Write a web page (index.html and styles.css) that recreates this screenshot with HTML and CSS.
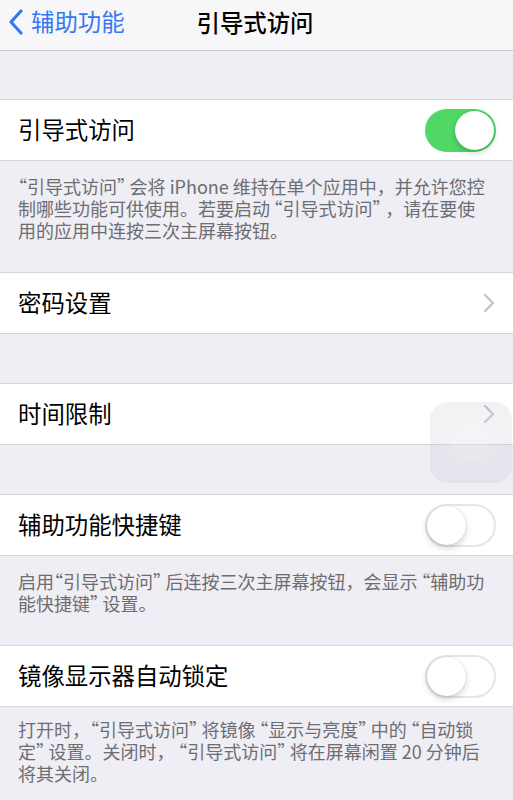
FILE: index.html
```html
<!DOCTYPE html>
<html lang="zh-CN">
<head>
<meta charset="utf-8">
<title>引导式访问</title>
<link rel="stylesheet" href="styles.css">
</head>
<body>
<div class="screen">
  <header class="nav">
    <div class="back">
      <svg class="back-icon" width="16" height="26" viewBox="0 0 16 26"><path d="M13 2 L3 13 L13 24" fill="none" stroke="#3478f6" stroke-width="3.2" stroke-linecap="round" stroke-linejoin="round"/></svg>
      <span class="back-text">辅助功能</span>
    </div>
    <div class="title">引导式访问</div>
    <div></div>
  </header>

  <div class="spacer first"></div>

  <div class="group">
    <div class="row"><span class="label">引导式访问</span><span class="toggle on"><span class="knob"></span></span></div>
  </div>
  <p class="footer"><span class="ql">“</span>引导式访问<span class="qr">”</span>会将 iPhone 维持在单个应用中，并允许您控制哪些功能可供使用。若要启动<span class="ql">“</span>引导式访问<span class="qr">”</span>，请在要使用的应用中连按三次主屏幕按钮。</p>

  <div class="group">
    <div class="row"><span class="label">密码设置</span><svg class="chev" width="12" height="20" viewBox="0 0 12 20"><path d="M2 2 L10 10 L2 18" fill="none" stroke="#c4c4c9" stroke-width="2.4" stroke-linecap="round" stroke-linejoin="round"/></svg></div>
  </div>

  <div class="spacer"></div>

  <div class="group">
    <div class="row"><span class="label">时间限制</span><svg class="chev" width="12" height="20" viewBox="0 0 12 20"><path d="M2 2 L10 10 L2 18" fill="none" stroke="#c4c4c9" stroke-width="2.4" stroke-linecap="round" stroke-linejoin="round"/></svg></div>
  </div>

  <div class="spacer"></div>

  <div class="group">
    <div class="row"><span class="label">辅助功能快捷键</span><span class="toggle off"><span class="knob"></span></span></div>
  </div>
  <p class="footer">启用<span class="ql">“</span>引导式访问<span class="qr">”</span>后连按三次主屏幕按钮，会显示<span class="ql">“</span>辅助功能快捷键<span class="qr">”</span>设置。</p>

  <div class="group">
    <div class="row"><span class="label">镜像显示器自动锁定</span><span class="toggle off"><span class="knob"></span></span></div>
  </div>
  <p class="footer last">打开时，<span class="ql">“</span>引导式访问<span class="qr">”</span>将镜像<span class="ql">“</span>显示与亮度<span class="qr">”</span>中的<span class="ql">“</span>自动锁定<span class="qr">”</span>设置。关闭时，<span class="ql">“</span>引导式访问<span class="qr">”</span>将在屏幕闲置 20 分钟后将其关闭。</p>

  <div class="assistive"><span class="inner i1"></span><span class="inner i2"></span></div>
</div>
</body>
</html>
```

FILE: styles.css
```css
html, body {
  margin: 0;
  padding: 0;
}
body {
  background: #efeef4;
  font-family: "Noto Sans CJK SC", "Noto Sans", sans-serif;
  width: 513px;
  height: 800px;
  overflow: hidden;
}
.screen {
  position: relative;
  width: 513px;
  height: 800px;
  overflow: hidden;
}
.nav {
  height: 50px;
  background: #f7f7f9;
  border-bottom: 1px solid #c9c8cd;
  display: grid;
  grid-template-columns: 1fr auto 1fr;
  align-items: center;
}
.back {
  display: flex;
  align-items: center;
  padding-left: 8px;
  gap: 7px;
  color: #3478f6;
  font-size: 23.4px;
  margin-top: -6px;
}
.back-icon {
  display: block;
}
.back-text {
  line-height: 1;
}
.title {
  font-size: 23.4px;
  font-weight: 500;
  color: #000;
  margin-top: -6px;
  margin-right: 3px;
}
.spacer {
  height: 49px;
}
.spacer.first {
  height: 48px;
}
.group {
  background: #fff;
  border-top: 1px solid #d6d5da;
  border-bottom: 1px solid #d6d5da;
}
.row {
  height: 60px;
  display: flex;
  align-items: center;
  justify-content: space-between;
  padding: 0 17px 0 18px;
}
.label {
  font-size: 23.4px;
  color: #000;
  line-height: 1;
}
.chev {
  display: block;
  margin-right: 1px;
}
.toggle {
  position: relative;
  width: 71px;
  height: 43px;
  border-radius: 22px;
  box-sizing: border-box;
}
.toggle.on {
  background: #4fd865;
}
.toggle.off {
  background: #fff;
  border: 2px solid #e6e6ea;
}
.knob {
  position: absolute;
  width: 39px;
  height: 39px;
  border-radius: 50%;
  background: #fff;
  box-shadow: 0 3px 6px rgba(0,0,0,0.18), 0 0 1px rgba(0,0,0,0.2);
}
.toggle.on .knob {
  top: 2px;
  right: 2px;
}
.toggle.off .knob {
  top: 0;
  left: 0;
}
.footer {
  margin: 0;
  padding: 14px 22.5px 31px 18px;
  font-size: 18px;
  line-height: 22px;
  color: #6d6d72;
  text-spacing-trim: space-all;
}
.footer.last {
  padding-top: 11px;
}
.ql, .qr {
  font-feature-settings: "halt" 1;
}
.ql {
  padding-left: 0.2em;
}
.footer .ql:first-child {
  padding-left: 0;
}
.qr {
  padding-right: 0.2em;
}
.assistive {
  position: absolute;
  left: 430px;
  top: 402px;
  width: 82px;
  height: 81px;
  border-radius: 18px;
  background: rgba(188, 186, 198, 0.2);
}
.inner {
  position: absolute;
  border-radius: 14px;
  background: rgba(255, 255, 255, 0.12);
}
.i1 { left: 10px; top: 10px; width: 62px; height: 61px; }
.i2 { left: 22px; top: 22px; width: 38px; height: 37px; border-radius: 50%; background: rgba(255,255,255,0.1); }
```
